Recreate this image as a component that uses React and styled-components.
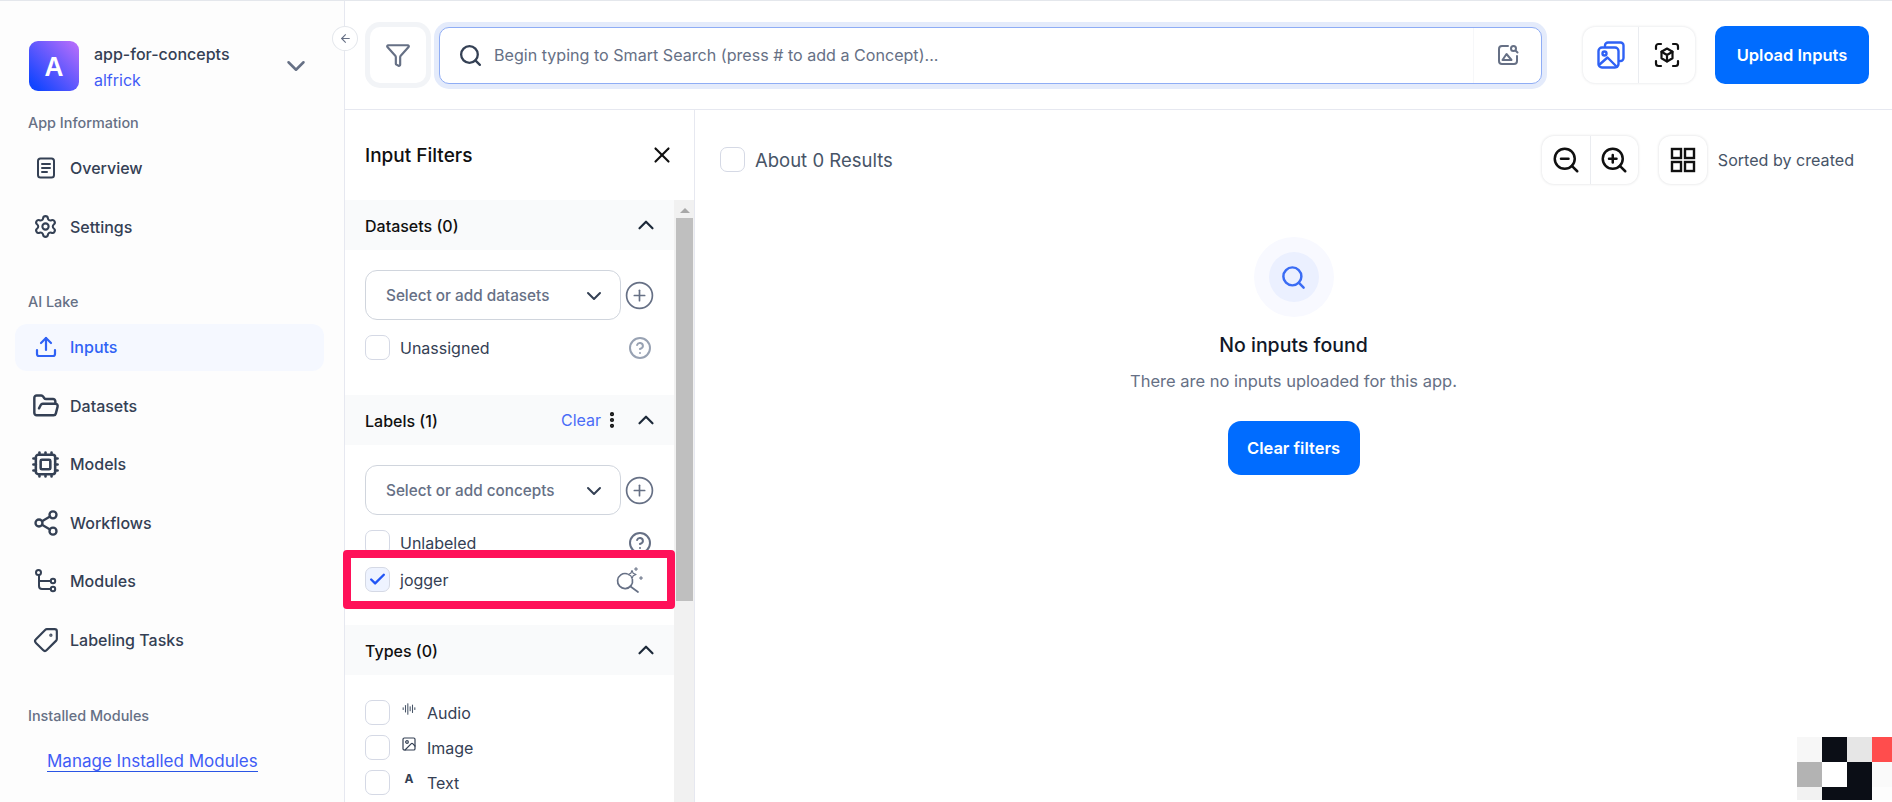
import React from "react";
import styled, { createGlobalStyle } from "styled-components";
import {
  ArrowLeft,
  AudioLines,
  Check,
  ChevronDown,
  ChevronUp,
  CircleHelp,
  CirclePlus,
  Cpu,
  FolderOpen,
  Funnel,
  Image,
  MoreVertical,
  Search,
  Settings,
  Share2,
  Tag,
  Upload,
  X,
  ZoomIn,
  ZoomOut,
} from "lucide-react";

const GlobalStyle = createGlobalStyle`
  html, body {
    margin: 0;
    height: 100%;
    overflow: hidden;
    background: #fff;
  }
  body {
    font-family: Inter, "Noto Sans", sans-serif;
    color: #344054;
  }
  * { box-sizing: border-box; }
`;

const OverviewIcon = () => (
  <svg width="24" height="24" viewBox="0 0 24 24" fill="none" stroke="currentColor" strokeWidth="2" strokeLinecap="round">
    <rect x="4" y="2.5" width="16" height="19" rx="2.5" />
    <path d="M8 8h8M8 12h8M8 16h5" />
  </svg>
);

const ModulesIcon = () => (
  <svg width="24" height="24" viewBox="0 0 24 24" fill="none" stroke="currentColor" strokeWidth="2">
    <circle cx="4.5" cy="3.5" r="2.5" />
    <circle cx="19" cy="12" r="2.2" />
    <circle cx="19" cy="20" r="2.2" />
    <path d="M5 6v11a3 3 0 0 0 3 3h8.800M5 12h11.800" />
  </svg>
);

const SparkSearchIcon = () => (
  <svg width="28" height="28" viewBox="0 0 28 28" fill="none" stroke="#667085" strokeWidth="1.7" strokeLinecap="round" strokeLinejoin="round">
    <path d="M12 7.800A7.500 7.500 0 1 0 17.400 13.500" />
    <path d="M15.500 20.500 23 26" />
    <path d="M17 4.500l1.200 2.800L21 8.500l-2.800 1.200L17 12.500l-1.200-2.800L13 8.500l2.800-1.200z" strokeWidth="1.200" />
    <path d="M21 1.500v3M19.500 3h3M26 10.500v3M24.500 12h3" strokeWidth="1.100" />
  </svg>
);

const ImageSearchIcon = () => (
  <svg width="24" height="24" viewBox="0 0 24 24" fill="none" stroke="#667085" strokeWidth="2" strokeLinecap="round" strokeLinejoin="round">
    <path d="M12 3H6a3 3 0 0 0-3 3v12a3 3 0 0 0 3 3h12a3 3 0 0 0 3-3v-5" />
    <circle cx="17.500" cy="5.500" r="2.500" />
    <path d="M20 8l1.500 1.500" />
    <path d="M6.500 17l4-6 5 6z" />
  </svg>
);

const StackedImagesIcon = () => (
  <svg width="28" height="28" viewBox="0 0 28 28" fill="none" stroke="#2f62f5" strokeWidth="2.400" strokeLinecap="round" strokeLinejoin="round">
    <path d="M8 5V4.500a3 3 0 0 1 3-3h12.500a3 3 0 0 1 3 3V17a3 3 0 0 1-3 3H23" />
    <rect x="1.500" y="6.500" width="20" height="20" rx="3.500" />
    <circle cx="7.500" cy="12.500" r="2" />
    <path d="M2 24l8.500-7.500L20 26" />
  </svg>
);

const ScanCubeIcon = () => (
  <svg width="26" height="26" viewBox="0 0 26 26" fill="none" stroke="#101010" strokeWidth="2.200" strokeLinecap="round" strokeLinejoin="round">
    <path d="M2 7V4.500A2.500 2.500 0 0 1 4.500 2H7M19 2h2.500A2.500 2.500 0 0 1 24 4.500V7M24 19v2.500a2.500 2.500 0 0 1-2.500 2.500H19M7 24H4.500A2.500 2.500 0 0 1 2 21.500V19" />
    <path d="M13 6.500l5.500 3.200v6.600L13 19.500l-5.500-3.200V9.700z" />
    <path d="M7.500 9.700 13 13l5.500-3.300M13 13v6.500" />
  </svg>
);

const SquaresIcon = () => (
  <svg width="26" height="26" viewBox="0 0 26 26" fill="none" stroke="#101010" strokeWidth="2.400">
    <rect x="2" y="2" width="9" height="9" />
    <rect x="15" y="2" width="9" height="9" />
    <rect x="2" y="15" width="9" height="9" />
    <rect x="15" y="15" width="9" height="9" />
  </svg>
);

const navItems = [
  { label: "Inputs", icon: <Upload size={24} strokeWidth={2.2} />, active: true },
  { label: "Datasets", icon: <FolderOpen size={28} strokeWidth={2.1} /> },
  { label: "Models", icon: <Cpu size={29} strokeWidth={2.1} /> },
  { label: "Workflows", icon: <Share2 size={28} strokeWidth={2} /> },
  { label: "Modules", icon: <ModulesIcon /> },
  { label: "Labeling Tasks", icon: <Tag size={26} strokeWidth={2} style={{ transform: "rotate(90deg)" }} /> },
];

const pixels = ["#f7f7f7", "#0b0e16", "#e6e6e6", "#ff4d4d", "#b3b3b3", "#ffffff", "#0b0e16", "#fafafa", "#f2f2f2", "#0b0e16", "#0b0e16", "#fdfdfd"];

export default function App() {
  return (
    <Page>
      <GlobalStyle />
      <Sidebar>
        <AppHeader>
          <AppAvatar>A</AppAvatar>
          <AppMeta>
            <AppName>app-for-concepts</AppName>
            <AppOwner>alfrick</AppOwner>
          </AppMeta>
          <ChevronDown size={30} color="#667085" strokeWidth={2} />
        </AppHeader>

        <SideLabel>App Information</SideLabel>
        <NavList>
          <NavRow><NavIcon><OverviewIcon /></NavIcon>Overview</NavRow>
          <NavRow><NavIcon><Settings size={25} strokeWidth={2} /></NavIcon>Settings</NavRow>
        </NavList>

        <SideLabel $top={42}>AI Lake</SideLabel>
        <NavList>
          {navItems.map((item) => (
            <NavRow key={item.label} $active={item.active}>
              <NavIcon>{item.icon}</NavIcon>
              {item.label}
            </NavRow>
          ))}
        </NavList>

        <SideLabel $top={43}>Installed Modules</SideLabel>
        <ManageLink>Manage Installed Modules</ManageLink>
      </Sidebar>

      <CollapseButton><ArrowLeft size={13} color="#667085" /></CollapseButton>

      <Content>
        <TopBar>
          <FilterButton><Funnel size={26} color="#667085" strokeWidth={2} /></FilterButton>
          <SearchBox>
            <Search size={25} color="#344054" strokeWidth={2.2} />
            <SearchText>Begin typing to Smart Search (press # to add a Concept)...</SearchText>
            <SearchEnd><ImageSearchIcon /></SearchEnd>
          </SearchBox>
          <ModeGroup>
            <ModeButton $active><StackedImagesIcon /></ModeButton>
            <ModeButton><ScanCubeIcon /></ModeButton>
          </ModeGroup>
          <PrimaryButton $w={154} $h={58} $radius={10}>Upload Inputs</PrimaryButton>
        </TopBar>

        <Body>
          <FilterPanel>
            <FilterTitleRow>
              <FilterTitle>Input Filters</FilterTitle>
              <X size={26} color="#101010" strokeWidth={2} />
            </FilterTitleRow>
            <FilterScroll>
              <FilterList>
                <SectionHeader>
                  <SectionTitle>Datasets (0)</SectionTitle>
                  <ChevronUp size={26} color="#1d2939" strokeWidth={2} />
                </SectionHeader>
                <SectionBody $h={145}>
                  <SelectRow>
                    <SelectBox>
                      <span>Select or add datasets</span>
                      <ChevronDown size={24} color="#344054" strokeWidth={2} />
                    </SelectBox>
                    <CirclePlus size={31} color="#667085" strokeWidth={1.3} />
                  </SelectRow>
                  <CheckRow>
                    <CheckBox />
                    <CheckText>Unassigned</CheckText>
                    <RowEnd><CircleHelp size={24} color="#98a2b3" strokeWidth={2} /></RowEnd>
                  </CheckRow>
                </SectionBody>

                <SectionHeader>
                  <SectionTitle>Labels (1)</SectionTitle>
                  <HeaderActions>
                    <ClearLink>Clear</ClearLink>
                    <MoreVertical size={20} color="#101010" strokeWidth={3} />
                  </HeaderActions>
                  <ChevronUp size={26} color="#1d2939" strokeWidth={2} />
                </SectionHeader>
                <SectionBody $h={180}>
                  <SelectRow>
                    <SelectBox>
                      <span>Select or add concepts</span>
                      <ChevronDown size={24} color="#344054" strokeWidth={2} />
                    </SelectBox>
                    <CirclePlus size={31} color="#667085" strokeWidth={1.3} />
                  </SelectRow>
                  <CheckRow>
                    <CheckBox />
                    <CheckText>Unlabeled</CheckText>
                    <RowEnd><CircleHelp size={24} color="#667085" strokeWidth={2} /></RowEnd>
                  </CheckRow>
                  <HighlightedRow>
                    <CheckBox $checked><Check size={19} color="#2155f5" strokeWidth={3} /></CheckBox>
                    <CheckText>jogger</CheckText>
                    <RowEnd><SparkSearchIcon /></RowEnd>
                  </HighlightedRow>
                </SectionBody>

                <SectionHeader>
                  <SectionTitle>Types (0)</SectionTitle>
                  <ChevronUp size={26} color="#1d2939" strokeWidth={2} />
                </SectionHeader>
                <TypeList>
                  <TypeRow>
                    <CheckBox />
                    <TypeIcon><AudioLines size={14} color="#475467" strokeWidth={1.8} /></TypeIcon>
                    <CheckText>Audio</CheckText>
                  </TypeRow>
                  <TypeRow>
                    <CheckBox />
                    <TypeIcon><Image size={16} color="#344054" strokeWidth={1.8} /></TypeIcon>
                    <CheckText>Image</CheckText>
                  </TypeRow>
                  <TypeRow>
                    <CheckBox />
                    <TypeIcon><TextGlyph>A</TextGlyph></TypeIcon>
                    <CheckText>Text</CheckText>
                  </TypeRow>
                </TypeList>
              </FilterList>
              <ScrollTrack>
                <ScrollArrow />
                <ScrollThumb />
              </ScrollTrack>
            </FilterScroll>
          </FilterPanel>

          <Results>
            <ResultsBar>
              <ResultsCount>
                <CheckBox />
                <span>About 0 Results</span>
              </ResultsCount>
              <ResultTools>
                <ToolGroup>
                  <ToolButton><ZoomOut size={30} color="#101010" strokeWidth={2} /></ToolButton>
                  <ToolButton><ZoomIn size={30} color="#101010" strokeWidth={2} /></ToolButton>
                </ToolGroup>
                <ToolGroup $left={21}>
                  <ToolButton><SquaresIcon /></ToolButton>
                </ToolGroup>
                <SortText>Sorted by created</SortText>
              </ResultTools>
            </ResultsBar>

            <EmptyState>
              <HaloOuter>
                <HaloInner><Search size={27} color="#3a6cf4" strokeWidth={2.2} /></HaloInner>
              </HaloOuter>
              <EmptyTitle>No inputs found</EmptyTitle>
              <EmptyText>There are no inputs uploaded for this app.</EmptyText>
              <PrimaryButton $w={132} $h={54} $radius={13}>Clear filters</PrimaryButton>
            </EmptyState>
          </Results>
        </Body>
      </Content>

      <PixelBadge>
        {pixels.map((color, i) => (
          <Pixel key={i} $color={color} />
        ))}
      </PixelBadge>
    </Page>
  );
}

const Page = styled.div`
  position: relative;
  display: flex;
  width: 1892px;
  height: 802px;
  overflow: hidden;
  border-top: 1px solid #e4e7ec;
`;

const Sidebar = styled.aside`
  flex: 0 0 345px;
  padding: 40px 20px 0 0;
  background: #fdfdfd;
  border-right: 1px solid #e6e8f0;
`;

const AppHeader = styled.div`
  display: flex;
  align-items: center;
  height: 50px;
  padding: 0 13px 0 29px;
`;

const AppAvatar = styled.div`
  display: flex;
  align-items: center;
  justify-content: center;
  flex: 0 0 50px;
  height: 50px;
  border-radius: 9px;
  background: linear-gradient(45deg, #1245ff 10%, #b56dfb 95%);
  color: #fff;
  font-size: 26px;
  font-weight: 600;
`;

const AppMeta = styled.div`
  flex: 1;
  display: flex;
  flex-direction: column;
  gap: 6px;
  padding: 2px 0 0 15px;
  font-size: 16px;
  line-height: 20px;
`;

const AppName = styled.div`
  font-weight: 500;
  color: #344054;
`;

const AppOwner = styled.div`
  color: #3f5cf6;
`;

const SideLabel = styled.div`
  margin: ${(p) => p.$top || 22}px 0 11.5px 28px;
  font-size: 14.4px;
  line-height: 20px;
  font-weight: 500;
  color: #667085;
`;

const NavList = styled.nav`
  display: flex;
  flex-direction: column;
  gap: 11.5px;
  margin-left: 15px;
`;

const NavRow = styled.div`
  display: flex;
  align-items: center;
  gap: 12px;
  height: 47px;
  padding-left: 18px;
  border-radius: 12px;
  font-size: 16px;
  font-weight: 500;
  color: ${(p) => (p.$active ? "#2f62f5" : "#344054")};
  background: ${(p) => (p.$active ? "#f5f8ff" : "transparent")};
`;

const NavIcon = styled.span`
  display: flex;
  align-items: center;
  justify-content: center;
  width: 25px;
  height: 28px;
  svg {
    flex-shrink: 0;
  }
`;

const ManageLink = styled.a`
  display: inline-block;
  margin: 13px 0 0 47px;
  font-size: 17px;
  line-height: 20px;
  color: #3f5cf6;
  border-bottom: 1px solid #2a55e5;
`;

const CollapseButton = styled.div`
  position: absolute;
  left: 332px;
  top: 25px;
  display: flex;
  align-items: center;
  justify-content: center;
  width: 26px;
  height: 25px;
  border-radius: 50%;
  background: #fff;
  border: 1px solid #e4e7ec;
  z-index: 2;
`;

const Content = styled.div`
  flex: 1;
  display: flex;
  flex-direction: column;
  min-width: 0;
`;

const TopBar = styled.header`
  display: flex;
  align-items: center;
  flex: 0 0 109px;
  padding: 0 23px 0 25px;
  border-bottom: 1px solid #e6e8f0;
`;

const FilterButton = styled.div`
  display: flex;
  align-items: center;
  justify-content: center;
  flex: 0 0 56px;
  height: 56px;
  border-radius: 10px;
  background: #fff;
  box-shadow: 0 0 0 5px #f2f4f7;
`;

const SearchBox = styled.div`
  display: flex;
  align-items: center;
  flex: 0 0 1103px;
  height: 57px;
  margin-left: 13px;
  padding-left: 18px;
  border: 1px solid #8fadf5;
  border-radius: 10px;
  box-shadow: 0 0 0 5px #e4ebfb;
  background: #fff;
`;

const SearchText = styled.span`
  flex: 1;
  padding-left: 11px;
  font-size: 16.1px;
  color: #667085;
`;

const SearchEnd = styled.div`
  display: flex;
  align-items: center;
  justify-content: center;
  width: 68px;
  height: 100%;
  border-left: 1px solid #f6f7f9;
`;

const ModeGroup = styled.div`
  position: relative;
  display: flex;
  margin-left: 41px;
  margin-right: 20px;
  border-radius: 12px;
  background: #fff;
  box-shadow: 0 0 3px rgba(16, 24, 40, 0.14);
  &::before {
    content: "";
    position: absolute;
    left: -21px;
    top: 0;
    width: 40px;
    height: 56px;
    border-radius: 12px 0 0 12px;
    box-shadow: 0 0 2px rgba(16, 24, 40, 0.05);
    z-index: -1;
  }
`;

const ModeButton = styled.div`
  display: flex;
  align-items: center;
  justify-content: center;
  width: 56px;
  height: 56px;
  border-radius: ${(p) => (p.$active ? "12px 0 0 12px" : "0 12px 12px 0")};
  border-right: ${(p) => (p.$active ? "1px solid #eaecf0" : "none")};
`;

const PrimaryButton = styled.div`
  display: flex;
  align-items: center;
  justify-content: center;
  flex-shrink: 0;
  width: ${(p) => p.$w}px;
  height: ${(p) => p.$h}px;
  border-radius: ${(p) => p.$radius}px;
  background: #006cff;
  color: #fff;
  font-size: 16.5px;
  font-weight: 600;
`;

const Body = styled.div`
  flex: 1;
  display: flex;
  min-height: 0;
`;

const FilterPanel = styled.section`
  flex: 0 0 350px;
  display: flex;
  flex-direction: column;
  border-right: 1px solid #e6e8f0;
`;

const FilterTitleRow = styled.div`
  display: flex;
  align-items: center;
  justify-content: space-between;
  flex: 0 0 90px;
  padding: 0 19px 0 20px;
`;

const FilterTitle = styled.h2`
  margin: 0;
  font-size: 19px;
  font-weight: 500;
  color: #101010;
`;

const FilterScroll = styled.div`
  flex: 1;
  display: flex;
  min-height: 0;
`;

const FilterList = styled.div`
  flex: 1;
  min-width: 0;
`;

const SectionHeader = styled.div`
  display: flex;
  align-items: center;
  height: 50px;
  padding: 0 15px 0 20px;
  background: #f9fafb;
`;

const SectionTitle = styled.h3`
  flex: 1;
  margin: 0;
  padding-top: 1px;
  font-size: 16px;
  font-weight: 500;
  color: #101010;
`;

const HeaderActions = styled.div`
  display: flex;
  align-items: center;
  gap: 1px;
  margin-right: 11px;
`;

const ClearLink = styled.span`
  font-size: 16px;
  color: #4a6cf7;
`;

const SectionBody = styled.div`
  position: relative;
  padding: 20px 0 0 20px;
  height: ${(p) => p.$h}px;
`;

const SelectRow = styled.div`
  display: flex;
  align-items: center;
  gap: 3px;
  height: 50px;
`;

const SelectBox = styled.div`
  display: flex;
  align-items: center;
  justify-content: space-between;
  flex: 0 0 256px;
  height: 50px;
  padding: 1px 14px 0 20px;
  border: 1px solid #d0d5dd;
  border-radius: 12px;
  font-size: 15.3px;
  font-weight: 500;
  color: #667085;
`;

const CheckRow = styled.div`
  display: flex;
  align-items: center;
  height: 25px;
  margin-top: 15px;
  padding-right: 22px;
`;

const HighlightedRow = styled(CheckRow)`
  position: absolute;
  left: -2px;
  top: 105px;
  width: 332px;
  height: 59px;
  margin: 0;
  padding: 0 24px 0 14px;
  border: 8px solid #ff1159;
  border-radius: 4px;
  background: #fff;
  z-index: 1;
`;

const CheckBox = styled.span`
  display: flex;
  align-items: center;
  justify-content: center;
  flex: 0 0 25px;
  width: 25px;
  height: 25px;
  border: 1px solid #d5d9e5;
  border-radius: 7px;
  background: ${(p) => (p.$checked ? "#eef3ff" : "#fff")};
`;

const CheckText = styled.span`
  margin-left: 10px;
  font-size: 16px;
  color: #344054;
`;

const RowEnd = styled.span`
  display: flex;
  margin-left: auto;
`;

const TypeList = styled.div`
  display: flex;
  flex-direction: column;
  gap: 10px;
  padding: 25px 0 0 20px;
`;

const TypeRow = styled.div`
  display: flex;
  align-items: center;
  height: 25px;
`;

const TypeIcon = styled.span`
  display: flex;
  align-items: center;
  justify-content: center;
  width: 16px;
  height: 16px;
  margin: -8px 0 0 11px;
`;

const TextGlyph = styled.span`
  font-size: 12px;
  font-weight: 700;
  color: #344054;
`;

const ScrollTrack = styled.div`
  flex: 0 0 20px;
  padding: 2px 1px 0 2px;
  background: #f1f1f1;
`;

const ScrollArrow = styled.div`
  width: 0;
  height: 0;
  margin: 6px auto 5px;
  border-left: 5px solid transparent;
  border-right: 5px solid transparent;
  border-bottom: 5px solid #a8a8a8;
`;

const ScrollThumb = styled.div`
  height: 383px;
  background: #bfbfbf;
`;

const Results = styled.main`
  flex: 1;
  min-width: 0;
  background: #fff;
`;

const ResultsBar = styled.div`
  display: flex;
  align-items: center;
  justify-content: space-between;
  padding: 26px 38px 0 25px;
  height: 73px;
`;

const ResultsCount = styled.div`
  display: flex;
  align-items: center;
  gap: 10px;
  font-size: 18.5px;
  color: #475467;
`;

const ResultTools = styled.div`
  display: flex;
  align-items: center;
`;

const ToolGroup = styled.div`
  display: flex;
  margin-left: ${(p) => p.$left || 0}px;
  border-radius: 12px;
  background: #fff;
  box-shadow: 0 0 3px rgba(16, 24, 40, 0.16);
`;

const ToolButton = styled.div`
  display: flex;
  align-items: center;
  justify-content: center;
  width: 48px;
  height: 48px;
  & + & {
    border-left: 1px solid #eaecf0;
  }
`;

const SortText = styled.span`
  margin-left: 11px;
  font-size: 16.1px;
  color: #475467;
`;

const EmptyState = styled.div`
  display: flex;
  flex-direction: column;
  align-items: center;
  padding-top: 54px;
`;

const HaloOuter = styled.div`
  display: flex;
  align-items: center;
  justify-content: center;
  width: 80px;
  height: 80px;
  border-radius: 50%;
  background: #f8f9ff;
`;

const HaloInner = styled.div`
  display: flex;
  align-items: center;
  justify-content: center;
  width: 50px;
  height: 50px;
  border-radius: 50%;
  background: #ebf0ff;
`;

const EmptyTitle = styled.h3`
  margin: 16px 0 0;
  font-size: 19.5px;
  line-height: 24px;
  font-weight: 500;
  color: #101828;
`;

const EmptyText = styled.p`
  margin: 12px 0 28px;
  font-size: 16.5px;
  line-height: 24px;
  color: #667085;
`;

const PixelBadge = styled.div`
  position: absolute;
  left: 1797px;
  top: 736px;
  display: grid;
  grid-template-columns: repeat(3, 25px) 20px;
  grid-template-rows: 25px 25px 13px;
  z-index: 3;
`;

const Pixel = styled.span`
  background: ${(p) => p.$color};
`;
